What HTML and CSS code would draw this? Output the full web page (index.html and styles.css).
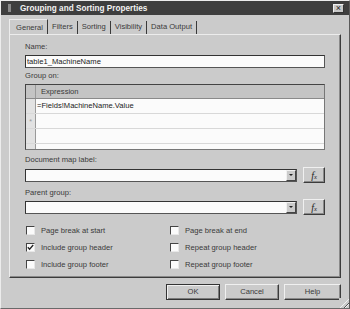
FILE: index.html
```html
<!DOCTYPE html>
<html lang="en">
	<head>
		<meta charset="UTF-8" />
		<meta name="viewport" content="width=device-width, initial-scale=1.0" />
		<title>Grouping and Sorting Properties</title>
		<link rel="stylesheet" href="styles.css">
	</head>
	<body>
		<div class="window">
			<div class="titlebar">
				<span class="app-icon"></span>
				<span class="title">Grouping and Sorting Properties</span>
				<span class="close">&times;</span>
			</div>
			<div class="tabs">
				<span class="tab active">General</span>
				<span class="tab">Filters</span>
				<span class="tab">Sorting</span>
				<span class="tab">Visibility</span>
				<span class="tab">Data Output</span>
			</div>
			<div class="panel">
				<label class="label">Name:</label>
				<div class="textbox">table1_MachineName</div>
				<label class="label spaced">Group on:</label>
				<div class="grid">
					<div class="grid-row head">
						<div class="row-head"></div>
						<div class="cell">Expression</div>
					</div>
					<div class="grid-row">
						<div class="row-head"></div>
						<div class="cell data">=Fields!MachineName.Value</div>
					</div>
					<div class="grid-row">
						<div class="row-head">*</div>
						<div class="cell"></div>
					</div>
					<div class="grid-row">
						<div class="row-head"></div>
						<div class="cell"></div>
					</div>
					<div class="grid-row">
						<div class="row-head"></div>
						<div class="cell"></div>
					</div>
				</div>
				<label class="label section">Document map label:</label>
				<div class="combo-row">
					<div class="combo"><span class="combo-btn"><span class="arrow"></span></span></div>
					<span class="fx">f<small>x</small></span>
				</div>
				<label class="label section">Parent group:</label>
				<div class="combo-row tight">
					<div class="combo"><span class="combo-btn"><span class="arrow"></span></span></div>
					<span class="fx">f<small>x</small></span>
				</div>
				<div class="checks">
					<div class="check"><span class="box"></span>Page break at start</div>
					<div class="check"><span class="box"></span>Page break at end</div>
					<div class="check">
						<span class="box">
							<svg width="7" height="7" viewBox="0 0 7 7"><polyline points="0.8,3.2 2.6,5.2 6.2,1" fill="none" stroke="#222" stroke-width="1.3" /></svg>
						</span>Include group header
					</div>
					<div class="check"><span class="box"></span>Repeat group header</div>
					<div class="check"><span class="box"></span>Include group footer</div>
					<div class="check"><span class="box"></span>Repeat group footer</div>
				</div>
			</div>
			<div class="buttons">
				<span class="button default">OK</span>
				<span class="button">Cancel</span>
				<span class="button wide">Help</span>
			</div>
			<div class="grip"></div>
		</div>
	</body>
</html>
```

FILE: styles.css
```css
* {
	margin: 0;
	padding: 0;
	box-sizing: border-box;
}
body {
	font-family: "Liberation Sans", Arial, sans-serif;
	font-size: 7.6px;
	color: #3a3a3a;
	background-color: #cbcbcb;
}
.window {
	position: relative;
	width: 350px;
	height: 309px;
	display: flex;
	flex-direction: column;
	background-color: #cbcbcb;
	border: 1px solid;
	border-color: #ececec #5a5a5a #6a6a6a #ececec;
}
.titlebar {
	height: 14px;
	display: flex;
	align-items: center;
	background-color: #3e3e3e;
	color: #f2f2f2;
	padding: 0 5px 0 7px;
}
.app-icon {
	width: 3px;
	height: 8px;
	margin-right: 9px;
	background-color: #8a8a8a;
}
.title {
	flex: 1;
	font-weight: bold;
	font-size: 8.2px;
}
.close {
	width: 11px;
	height: 9px;
	background-color: #c8c8c8;
	border: 1px solid;
	border-color: #f0f0f0 #333 #333 #f0f0f0;
	color: #222;
	font-size: 9px;
	line-height: 6px;
	text-align: center;
}
.tabs {
	display: flex;
	align-items: flex-end;
	height: 15px;
	margin-top: 4px;
	padding-left: 8px;
}
.tab {
	height: 13px;
	line-height: 12px;
	padding: 0 4px;
	border-right: 1px solid #3a3a3a;
}
.tab.active {
	height: 15px;
	line-height: 15px;
	padding-left: 6px;
	border-left: 1px solid #ececec;
	border-top: 1px solid #ececec;
}
.panel {
	margin: 0 8px;
	padding: 7px 15px 4px 15px;
	border: 1px solid;
	border-color: #ececec #3c3c3c #3c3c3c #ececec;
	box-shadow: inset -1px -1px #8a8a8a;
}
.label {
	display: block;
	height: 10px;
	line-height: 10px;
}
.label.spaced {
	margin-top: 3px;
}
.label.section {
	margin-top: 5px;
}
.textbox {
	height: 13px;
	margin-top: 3px;
	padding-left: 1px;
	line-height: 11px;
	background-color: #fbfbfb;
	border: 1px solid;
	border-color: #333 #555 #555 #333;
	color: #222;
}
.grid {
	height: 66px;
	margin-top: 3px;
	overflow: hidden;
	background-color: #fbfbfb;
	border: 1px solid;
	border-color: #444 #777 #777 #444;
}
.grid-row {
	display: flex;
	height: 15px;
	border-bottom: 1px solid #d8d8d8;
}
.grid-row.head {
	height: 14px;
	background-color: #c4c4c4;
	border-bottom: 1px solid #8a8a8a;
}
.row-head {
	flex: none;
	width: 10px;
	border-right: 1px solid #9a9a9a;
	background-color: #e2e2e2;
	color: #999;
	font-size: 7px;
	line-height: 15px;
	text-align: center;
}
.head .row-head {
	background-color: #c4c4c4;
}
.cell {
	flex: 1;
	padding-left: 5px;
	line-height: 14px;
}
.cell.data {
	padding-left: 1px;
	color: #222;
}
.combo-row {
	display: flex;
	align-items: center;
	height: 16px;
	margin-top: 2px;
}
.combo-row.tight {
	margin-top: 1px;
}
.combo {
	width: 272px;
	height: 13px;
	display: flex;
	justify-content: flex-end;
	background-color: #fbfbfb;
	border: 1px solid;
	border-color: #333 #555 #555 #333;
}
.combo-btn {
	width: 10px;
	height: 11px;
	display: flex;
	justify-content: center;
	align-items: center;
	background-color: #cbcbcb;
	border: 1px solid;
	border-color: #f0f0f0 #444 #444 #f0f0f0;
}
.arrow {
	border-left: 2px solid transparent;
	border-right: 2px solid transparent;
	border-top: 2px solid #222;
}
.fx {
	width: 22px;
	height: 16px;
	margin-left: 6px;
	display: flex;
	justify-content: center;
	align-items: center;
	border: 1px solid;
	border-color: #f0f0f0 #3c3c3c #3c3c3c #f0f0f0;
	box-shadow: inset -1px -1px #8a8a8a;
	font-family: "Liberation Serif", serif;
	font-style: italic;
	font-size: 10px;
	color: #222;
}
.fx small {
	font-size: 6.5px;
	margin-top: 3px;
}
.checks {
	display: grid;
	grid-template-columns: 144px 1fr;
	grid-auto-rows: 17px;
	margin-top: 7px;
}
.check {
	display: flex;
	align-items: center;
	gap: 6px;
	padding-left: 1px;
}
.box {
	width: 9px;
	height: 9px;
	display: flex;
	justify-content: center;
	align-items: center;
	background-color: #fbfbfb;
	border: 1px solid;
	border-color: #444 #e8e8e8 #e8e8e8 #444;
}
.buttons {
	display: flex;
	justify-content: flex-end;
	gap: 5px;
	margin-top: 6px;
	padding-right: 8px;
}
.button {
	width: 54px;
	height: 16px;
	line-height: 14px;
	text-align: center;
	border: 1px solid;
	border-color: #f0f0f0 #3c3c3c #3c3c3c #f0f0f0;
	box-shadow: inset -1px -1px #8a8a8a;
}
.button.default {
	border-color: #333;
	box-shadow: inset 1px 1px #f0f0f0, inset -1px -1px #7a7a7a;
}
.button.wide {
	width: 57px;
}
.grip {
	position: absolute;
	right: 0;
	bottom: 0;
	width: 10px;
	height: 10px;
	background:
		linear-gradient(135deg, #cbcbcb 0 52%, transparent 52%),
		repeating-linear-gradient(135deg, transparent 0 2px, #555 2px 3px, #f0f0f0 3px 4px);
}
```
